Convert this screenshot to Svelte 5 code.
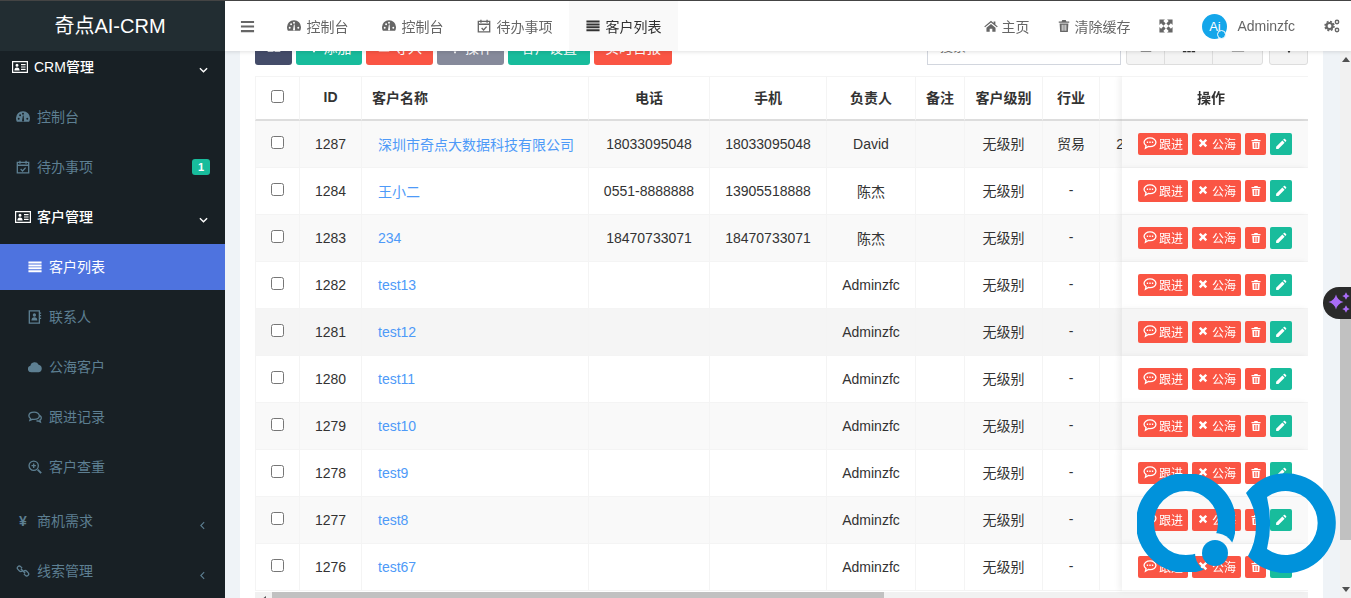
<script>
	// filled (f) and stroked (s) shapes, all on a 16x16 box
	const icons = {
		gauge: { f: 'M8 1.500a7.800 7.800 0 0 0-8 8c0 1.500.4 2.900 1 4h14c.6-1.100 1-2.500 1-4a7.800 7.800 0 0 0-8-8zM4.200 10a1.100 1.100 0 1 1-2.200 0 1.100 1.100 0 0 1 2.200 0zM5.800 6a1.100 1.100 0 1 1-2.200 0 1.100 1.100 0 0 1 2.200 0zM9.100 4.200a1.100 1.100 0 1 1-2.200 0 1.100 1.100 0 0 1 2.200 0zM14 10a1.100 1.100 0 1 1-2.200 0 1.100 1.100 0 0 1 2.200 0zM6.900 12.400l1-6h.8l.5 6a1.200 1.200 0 0 1-2.300 0z' },
		calendar: { s: 'M1.500 2.800h13v12h-13zM1.500 6h13M4.500 .8v3.400M11.500 .8v3.400M5.300 10.300l2.200 2.200 3.500-3.800' },
		idcard: { f: 'M0 2h16v12H0zM1.200 3.200v9.600h13.600V3.200zM5 4.800a1.500 1.500 0 1 1 0 3 1.500 1.500 0 0 1 0-3zM2.400 11.400c0-2 .9-3 2.600-3s2.600 1 2.600 3zM9 5h4.600v1.200H9zM9 7.400h4.600v1.200H9zM9 9.800h4.600V11H9z' },
		lines: { f: 'M.5 1.800h15v2.200H.5zM.5 5.100h15v2.200H.5zM.5 8.400h15v2.200H.5zM.5 11.700h15v2.200H.5z' },
		bars: { f: 'M1 2h14v2.200H1zM1 6.900h14v2.200H1zM1 11.800h14V14H1z' },
		book: { s: 'M1.500 1h11.500v14H1.500zM13 3.500h2M13 6.500h2M13 9.500h2', f: 'M7.300 3.800a1.900 1.900 0 1 1 0 3.800 1.900 1.900 0 0 1 0-3.800zM3.900 12c0-2.500 1.200-3.800 3.400-3.800s3.400 1.300 3.400 3.800z' },
		cloud: { f: 'M3.600 14a3.700 3.700 0 0 1-.9-7.300 5 5 0 0 1 9.400-1.300 4.400 4.400 0 0 1 .3 8.600z' },
		comments: { s: 'M7 2.500C3.500 2.500 1 4.300 1 6.700c0 1.300.7 2.300 1.900 3.100l-.7 2 2.800-1.200c.6.100 1.300.2 2 .2 3.500 0 6-1.800 6-4.100S10.500 2.500 7 2.500zM13.700 6.500c1 .6 1.500 1.500 1.500 2.600 0 1-.6 1.900-1.600 2.500l.6 2.200-2.500-1.300c-.7.1-1.400.1-2.100 0' },
		search: { s: 'M6.500 1.200a5.300 5.300 0 1 0 0 10.600 5.300 5.300 0 0 0 0-10.600zM4 6.500h5M6.500 4v5', f: 'M10.300 11.800l1.500-1.500 4 4-1.500 1.500z' },
		link: { s: 'M7 4.700L5.300 3a2.200 2.200 0 0 0-3.100 0 2.200 2.200 0 0 0 0 3.100L4 7.900a2.200 2.200 0 0 0 3 0M9 11.300l1.700 1.700a2.200 2.200 0 0 0 3.100 0 2.200 2.200 0 0 0 0-3.100L12 8.100a2.200 2.200 0 0 0-3 0M5.500 5.500l5 5' },
		home: { f: 'M8 2L.3 8.500l.9 1L8 3.900l6.800 5.600.9-1L13 6.200V2.800h-2v1.700zM2.800 10v4.500h3.700v-3.500h3v3.500h3.700V10L8 5.700z' },
		trash: { f: 'M5.300 2.800L6 1.200h4l.7 1.600H14v1.400H2V2.800zM3 5.200h10l-.6 9.600H3.600zM5.400 6.600v6.800h1V6.600zM7.500 6.600v6.800h1V6.600zM9.600 6.600v6.800h1V6.600z' },
		expand: { f: 'M.5 .5h6.300L4.900 2.400 7.600 5.100 5.100 7.600 2.400 4.900 .5 6.800zM15.500 .5v6.300l-1.900-1.900-2.700 2.700-2.500-2.500 2.700-2.700L9.200 .5zM.5 15.500V9.200l1.900 1.900 2.700-2.700 2.500 2.500-2.700 2.700 1.900 1.900zM15.500 15.500H9.200l1.900-1.900-2.700-2.700 2.500-2.500 2.700 2.700 1.900-1.900z' },
		comment: { s: 'M8 2.200C4.200 2.200 1.200 4.400 1.200 7.200c0 1.500.9 2.800 2.300 3.800L2.800 14l3.400-2c.6.100 1.200.200 1.800.200 3.800 0 6.800-2.200 6.800-5S11.800 2.200 8 2.200z', f: 'M4.300 6.400h1.600V8H4.300zM7.200 6.400h1.600V8H7.200zM10.100 6.400h1.600V8h-1.600z' },
		times: { f: 'M2.500 4.800l2.300-2.300L8 5.700l3.200-3.200 2.300 2.300L10.300 8l3.200 3.200-2.300 2.300L8 10.300l-3.200 3.200-2.300-2.300L5.700 8z' },
		pencil: { f: 'M1.500 11.500L9.800 3.200l3 3-8.300 8.300H1.500zM10.800 2.200l1-1c.4-.4 1-.4 1.400 0l1.600 1.600c.4.4.4 1 0 1.400l-1 1z' },
		plus: { f: 'M6.800 2h2.400v4.800H14v2.400H9.200V14H6.800V9.200H2V6.800h4.800z' },
		upload: { f: 'M2 4h12v9H2zM3.500 5.500v6h9v-6z' },
		gear: { f: 'M8 3a5 5 0 1 1 0 10A5 5 0 0 1 8 3zM1 7h14v2H1zM7 1h2v14H7z' },
		columns: { f: 'M1 2h4v12H1zM6 2h4v12H6zM11 2h4v12h-4z' },
		bar: { f: 'M1 2h14v11H1z' },
		caret: { f: 'M6.500 1h3v8l3-1-4.500 7-4.500-7 3 1z' }
	};

	const tabs = [
		{ icon: 'gauge', label: '控制台' },
		{ icon: 'gauge', label: '控制台' },
		{ icon: 'calendar', label: '待办事项' },
		{ icon: 'lines', label: '客户列表', active: true }
	];

	const menu = [
		{ kind: 'head first', icon: 'idcard', label: 'CRM管理', arrow: 'down' },
		{ kind: 'item', icon: 'gauge', label: '控制台' },
		{ kind: 'item', icon: 'calendar', label: '待办事项', badge: '1' },
		{ kind: 'head', icon: 'idcard', label: '客户管理', arrow: 'down' },
		{ kind: 'sub active', icon: 'lines', label: '客户列表' },
		{ kind: 'sub', icon: 'book', label: '联系人' },
		{ kind: 'sub', icon: 'cloud', label: '公海客户' },
		{ kind: 'sub', icon: 'comments', label: '跟进记录' },
		{ kind: 'sub', icon: 'search', label: '客户查重' },
		{ kind: 'item apart', glyph: '¥', label: '商机需求', arrow: 'left' },
		{ kind: 'item', icon: 'link', label: '线索管理', arrow: 'left' }
	];

	const columns = ['ID', '客户名称', '电话', '手机', '负责人', '备注', '客户级别', '行业'];

	const rows = [
		{ id: 1287, name: '深圳市奇点大数据科技有限公司', phone: '18033095048', mobile: '18033095048', owner: 'David', trade: '贸易', time: '2024-05-10 10:00' },
		{ id: 1284, name: '王小二', phone: '0551-8888888', mobile: '13905518888', owner: '陈杰', trade: '-', time: '-' },
		{ id: 1283, name: '234', phone: '18470733071', mobile: '18470733071', owner: '陈杰', trade: '-', time: '-' },
		{ id: 1282, name: 'test13', phone: '', mobile: '', owner: 'Adminzfc', trade: '-', time: '-' },
		{ id: 1281, name: 'test12', phone: '', mobile: '', owner: 'Adminzfc', trade: '-', time: '-', hover: true },
		{ id: 1280, name: 'test11', phone: '', mobile: '', owner: 'Adminzfc', trade: '-', time: '-' },
		{ id: 1279, name: 'test10', phone: '', mobile: '', owner: 'Adminzfc', trade: '-', time: '-' },
		{ id: 1278, name: 'test9', phone: '', mobile: '', owner: 'Adminzfc', trade: '-', time: '-' },
		{ id: 1277, name: 'test8', phone: '', mobile: '', owner: 'Adminzfc', trade: '-', time: '-' },
		{ id: 1276, name: 'test67', phone: '', mobile: '', owner: 'Adminzfc', trade: '-', time: '-' }
	];
</script>

{#snippet icon(name, cls = '')}
	<svg class="icon {cls}" viewBox="0 0 16 16" aria-hidden="true">
		{#if icons[name].f}<path d={icons[name].f} fill="currentColor" fill-rule="evenodd" />{/if}
		{#if icons[name].s}<path d={icons[name].s} fill="none" stroke="currentColor" stroke-width="1.500" />{/if}
	</svg>
{/snippet}

{#snippet star(x, y, r)}
	<path d="M{x} {y - r}Q{x + r * 0.2} {y - r * 0.2} {x + r} {y}Q{x + r * 0.2} {y + r * 0.2} {x} {y + r}Q{x - r * 0.2} {y + r * 0.2} {x - r} {y}Q{x - r * 0.2} {y - r * 0.2} {x} {y - r}z" />
{/snippet}

<div class="app">
	<aside class="sidebar">
		<div class="logo">奇点AI-CRM</div>
		<nav class="menu">
			{#each menu as m}
				<a class="row {m.kind}" href="#/">
					<span class="ico">
						{#if m.glyph}<b class="glyph">{m.glyph}</b>{:else}{@render icon(m.icon)}{/if}
					</span>
					<span class="label">{m.label}</span>
					{#if m.badge}<span class="badge">{m.badge}</span>{/if}
					{#if m.arrow === 'down'}
						<svg class="chev" viewBox="0 0 10 6"><path d="M1 1l4 4 4-4" fill="none" stroke="currentColor" stroke-width="1.500" /></svg>
					{/if}
					{#if m.arrow === 'left'}
						<svg class="chev left" viewBox="0 0 6 10"><path d="M5 1L1 5l4 4" fill="none" stroke="currentColor" stroke-width="1.300" /></svg>
					{/if}
				</a>
			{/each}
		</nav>
	</aside>

	<div class="right">
		<header class="topbar">
			<span class="burger">{@render icon('bars')}</span>
			<div class="tabs">
				{#each tabs as t}
					<span class="tab" class:active={t.active}>{@render icon(t.icon)}{t.label}</span>
				{/each}
			</div>
			<div class="tools">
				<span class="tool home">{@render icon('home')}主页</span>
				<span class="tool clear">{@render icon('trash')}清除缓存</span>
				<span class="tool full">{@render icon('expand')}</span>
				<span class="user">
					<span class="avatar">Ai<i></i></span>
					Adminzfc
				</span>
				<svg class="cogs" viewBox="0 0 16 16" aria-hidden="true">
					<circle cx="5.500" cy="8" r="3" fill="none" stroke="currentColor" stroke-width="2.200" />
					<circle cx="5.500" cy="8" r="4.500" fill="none" stroke="currentColor" stroke-width="1.500" stroke-dasharray="2 1.530" />
					<circle cx="13" cy="4" r="1.700" fill="none" stroke="currentColor" stroke-width="1.400" />
					<circle cx="13" cy="12" r="1.700" fill="none" stroke="currentColor" stroke-width="1.400" />
				</svg>
			</div>
		</header>

		<div class="body">
			<main class="content">
				<section class="panel">
					<div class="toolbar">
						<button class="btn navy one">{@render icon('gauge')}</button>
						<button class="btn green add">{@render icon('plus')}添加</button>
						<button class="btn red">{@render icon('upload')}导入</button>
						<button class="btn grey">{@render icon('gear')}操作</button>
						<button class="btn green wide">客户设置</button>
						<button class="btn red slim">实时日报</button>
						<input class="search" placeholder="搜索" />
						<div class="group">
							<span class="a">{@render icon('upload')}</span>
							<span class="b">{@render icon('columns')}</span>
							<span class="c">{@render icon('bar')}</span>
						</div>
						<div class="group single">
							<span class="d">{@render icon('caret')}</span>
						</div>
					</div>

					<div class="tablewrap">
						<table>
							<colgroup>
								<col class="c-check" /><col class="c-id" /><col class="c-name" /><col class="c-phone" />
								<col class="c-mobile" /><col class="c-owner" /><col class="c-note" /><col class="c-level" />
								<col class="c-trade" /><col class="c-time" /><col class="c-extra" /><col class="c-extra" />
								<col class="c-ops" />
							</colgroup>
							<thead>
								<tr>
									<th><input type="checkbox" /></th>
									{#each columns as c, i}
										<th class:left={i === 1}>{c}</th>
									{/each}
									<th>创建时间</th>
									<th>更新时间</th>
									<th>地址</th>
									<th class="ops">操作</th>
								</tr>
							</thead>
							<tbody>
								{#each rows as r}
									<tr class:hover={r.hover}>
										<td><input type="checkbox" /></td>
										<td>{r.id}</td>
										<td class="name"><a href="#/">{r.name}</a></td>
										<td>{r.phone}</td>
										<td>{r.mobile}</td>
										<td>{r.owner}</td>
										<td></td>
										<td class="cjk">无级别</td>
										<td class="cjk">{r.trade}</td>
										<td>{r.time}</td>
										<td>-</td>
										<td>-</td>
										<td class="ops">
											<div class="actions">
												<span class="xs red follow">{@render icon('comment')}跟进</span>
												<span class="xs red">{@render icon('times')}公海</span>
												<span class="xs red sq">{@render icon('trash')}</span>
												<span class="xs green sq edit">{@render icon('pencil')}</span>
											</div>
										</td>
									</tr>
								{/each}
							</tbody>
						</table>
						<div class="hscroll">
							<span class="arrow"></span>
							<span class="hthumb"></span>
						</div>
					</div>
				</section>
			</main>

			<div class="vscroll">
				<span class="up"></span>
				<span class="gap"></span>
				<span class="vthumb"></span>
				<span class="rest"></span>
				<span class="down"></span>
			</div>
		</div>
	</div>

	<!-- floating assistant tab on the right edge -->
	<div class="assistant">
		<svg viewBox="0 0 28 32" fill="#a96cf6" aria-hidden="true">
			{@render star(13, 15, 7.500)}
			{@render star(23, 9, 3.800)}
			{@render star(23, 22, 3.800)}
		</svg>
	</div>

	<!-- watermark logo sitting over the table -->
	<svg class="watermark" viewBox="0 0 200 100" aria-hidden="true">
		<mask id="qcut">
			<rect width="200" height="100" fill="#fff" />
			<circle cx="79" cy="80" r="20" fill="#000" />
		</mask>
		<circle cx="50" cy="50" r="41" fill="none" stroke="#0092db" stroke-width="18" mask="url(#qcut)" />
		<circle cx="79" cy="80" r="13" fill="#0092db" />
		<path fill="#0092db" fill-rule="evenodd" d="M110 20A50 50 0 1 1 112 83A60 60 0 0 0 110 20zM131 24A32 32 0 1 1 131 76A110 110 0 0 0 131 24z" />
	</svg>
</div>

<style>
	:global(body) {
		margin: 0;
		overflow: hidden;
	}

	.app {
		position: relative;
		display: flex;
		height: 597px;
		overflow: hidden;
		border-top: 1px solid #444;
		font-family: 'Liberation Sans', 'Noto Sans CJK SC', sans-serif;
		font-size: 14px;
		color: #333;
	}

	.icon {
		width: 14px;
		height: 14px;
		flex: none;
	}

	/* sidebar */
	.sidebar {
		width: 225px;
		flex: none;
		background: #182025;
		display: flex;
		flex-direction: column;
		overflow: hidden;
	}

	.logo {
		position: relative;
		z-index: 1;
		height: 50px;
		flex: none;
		padding-right: 5px;
		background: #222d32;
		color: #fff;
		font-size: 20px;
		line-height: 50px;
		text-align: center;
	}

	.menu {
		margin-top: -7px;
	}

	.row {
		display: flex;
		align-items: center;
		height: 46px;
		margin-bottom: 4px;
		padding: 0 15px 0 16px;
		color: #5d7f92;
		text-decoration: none;
		position: relative;
	}

	.row .ico {
		width: 21px;
		flex: none;
		display: flex;
		align-items: center;
	}

	.row .glyph {
		font-size: 14px;
		margin-left: 3px;
	}

	.row .label {
		flex: 1;
		padding-bottom: 2px;
	}

	.head {
		color: #fff;
		font-weight: 500;
		padding-left: 15px;
	}

	.head .ico {
		width: 22px;
	}

	.head .icon {
		width: 16px;
		height: 16px;
	}

	.head.first {
		padding-left: 12px;
	}

	.sub {
		padding-left: 28px;
	}

	.sub.active {
		background: #4e73df;
		color: #fff;
	}

	.apart {
		margin-top: 8px;
	}

	.badge {
		width: 18px;
		height: 16px;
		border-radius: 3px;
		background: #18bc9c;
		color: #fff;
		font-size: 11px;
		font-weight: 700;
		line-height: 16px;
		text-align: center;
	}

	.chev {
		width: 9px;
		height: 6px;
		margin: 6px 2px 0 0;
		flex: none;
	}

	.chev.left {
		width: 5px;
		height: 9px;
		margin: 8px 5px 0 0;
	}

	/* top bar */
	.right {
		flex: 1;
		min-width: 0;
		display: flex;
		flex-direction: column;
	}

	.topbar {
		position: relative;
		z-index: 2;
		height: 50px;
		flex: none;
		display: flex;
		align-items: center;
		background: #fff;
		color: #666;
		box-shadow: 0 1px 4px rgba(0, 0, 0, 0.12);
	}

	.burger {
		width: 45px;
		display: flex;
		justify-content: center;
		color: #666;
	}

	.burger .icon {
		width: 15px;
		height: 15px;
	}

	.tabs {
		display: flex;
		height: 100%;
	}

	.tab {
		display: flex;
		align-items: center;
		gap: 6px;
		padding: 0 16.500px;
		white-space: nowrap;
	}

	.tab.active {
		background: #f9f9f9;
		color: #333;
	}

	.tools {
		margin-left: auto;
		display: flex;
		align-items: center;
		height: 100%;
	}

	.tool {
		display: flex;
		align-items: center;
		gap: 3px;
	}

	.clear {
		margin-left: 28px;
	}

	.full {
		margin-left: 29px;
	}

	.user {
		display: flex;
		align-items: center;
		gap: 10px;
		margin-left: 29px;
	}

	.avatar {
		position: relative;
		width: 25px;
		height: 25px;
		border-radius: 50%;
		background: #14a6ea;
		color: #fff;
		font-size: 13px;
		line-height: 25px;
		text-align: center;
	}

	.avatar i {
		position: absolute;
		right: 1px;
		bottom: 0;
		width: 7px;
		height: 7px;
		border-radius: 50%;
		background: #14a6ea;
		border: 1px solid #fff;
	}

	.cogs {
		width: 16px;
		height: 16px;
		margin: 0 11px 0 29px;
		color: #666;
	}

	/* page body */
	.body {
		flex: 1;
		min-height: 0;
		display: flex;
	}

	.content {
		flex: 1;
		min-width: 0;
		background: #eff3f7;
		padding-left: 15px;
		padding-right: 17px;
		overflow: hidden;
	}

	.panel {
		display: flow-root;
		background: #fff;
		height: 100%;
		padding: 0 15px;
	}

	.toolbar {
		display: flex;
		gap: 4px;
		margin-top: -23px;
		margin-bottom: 11px;
		height: 37px;
	}

	.btn {
		display: flex;
		align-items: center;
		gap: 3px;
		height: 37px;
		padding: 0 11px;
		border: 0;
		border-radius: 3px;
		color: #fff;
		font: inherit;
		white-space: nowrap;
	}

	.one {
		width: 37px;
		justify-content: center;
		padding: 0;
	}

	.add {
		padding: 0 10.500px;
	}

	.wide {
		padding: 0 13px;
	}

	.slim {
		padding: 0 11px;
	}

	.navy {
		background: #444c69;
	}

	.green {
		background: #18bc9c;
	}

	.red {
		background: #fa5544;
	}

	.grey {
		background: #868a9b;
	}

	.search {
		width: 194px;
		height: 37px;
		box-sizing: border-box;
		margin-left: auto;
		padding: 0 12px;
		border: 1px solid #d2d6de;
		font: inherit;
		font-size: 13px;
		outline: none;
	}

	.group {
		display: flex;
		margin: 0 0 0 1px;
		height: 37px;
		box-sizing: border-box;
		background: #f4f4f4;
		border: 1px solid #ddd;
		border-radius: 3px;
		color: #333;
	}

	.group.single {
		margin-left: 2px;
	}

	.group span {
		display: flex;
		align-items: center;
		justify-content: center;
		box-sizing: border-box;
		border-left: 1px solid #ddd;
	}

	.group span:first-child {
		border-left: 0;
	}

	.a {
		width: 37px;
	}

	.b {
		width: 48px;
	}

	.c {
		width: 50px;
	}

	.d {
		width: 37px;
	}

	/* table */
	.tablewrap {
		width: 1053px;
		overflow: hidden;
	}

	table {
		width: 1753px;
		table-layout: fixed;
		border-collapse: separate;
		border-spacing: 0;
	}

	.c-check {
		width: 45px;
	}

	.c-id {
		width: 62px;
	}

	.c-name {
		width: 227px;
	}

	.c-phone {
		width: 121px;
	}

	.c-mobile {
		width: 117px;
	}

	.c-owner {
		width: 89px;
	}

	.c-note {
		width: 49px;
	}

	.c-level {
		width: 78px;
	}

	.c-trade {
		width: 57px;
	}

	.c-time {
		width: 144px;
	}

	.c-extra {
		width: 289px;
	}

	.c-ops {
		width: 186px;
	}

	th,
	td {
		box-sizing: border-box;
		padding: 0 8px;
		text-align: center;
		white-space: nowrap;
		overflow: hidden;
		background: #fff;
		border-right: 1px solid #f4f4f4;
		border-bottom: 1px solid #f4f4f4;
	}

	th:first-child,
	td:first-child {
		border-left: 1px solid #f4f4f4;
	}

	th {
		height: 45px;
		padding-bottom: 2px;
		border-top: 1px solid #f4f4f4;
		border-bottom: 2px solid #ddd;
		font-weight: 700;
	}

	th.left {
		text-align: left;
		padding-left: 10px;
	}

	td {
		height: 47px;
	}

	td.cjk {
		padding-bottom: 2px;
	}

	tbody tr:nth-child(odd) td {
		background: #f9f9f9;
	}

	tbody tr.hover td {
		background: #f5f5f5;
	}

	input[type='checkbox'] {
		position: relative;
		top: -1px;
		margin: 0;
		vertical-align: -1px;
	}

	th input[type='checkbox'] {
		top: 0;
	}

	td.name {
		text-align: left;
		padding-left: 16px;
	}

	td.name a {
		color: #4e9af8;
		text-decoration: none;
	}

	.ops {
		position: sticky;
		right: 0;
		border-right: 0;
		box-shadow: -3px 0 6px rgba(0, 0, 0, 0.06);
	}

	th.ops {
		padding-right: 16px;
	}

	.actions {
		display: flex;
		justify-content: center;
		gap: 4px;
	}

	.xs {
		display: flex;
		align-items: center;
		justify-content: center;
		gap: 3px;
		height: 22px;
		box-sizing: border-box;
		padding: 0 5px 2px;
		border-radius: 2px;
		color: #fff;
		font-size: 12px;
	}

	.xs .icon {
		width: 12px;
		height: 12px;
	}

	.follow .icon {
		width: 14px;
		height: 14px;
	}

	.follow {
		gap: 2px;
	}

	.xs.sq {
		width: 21px;
		padding: 0 0 1px;
	}

	.xs.edit {
		width: 22px;
	}

	.hscroll {
		display: flex;
		height: 15px;
		margin-top: 1px;
		background: #f1f1f1;
	}

	.arrow {
		width: 17px;
		display: flex;
		justify-content: center;
		align-items: center;
	}

	.arrow::before {
		content: '';
		border: 4px solid transparent;
		border-left: 0;
		border-right: 5px solid #505050;
	}

	.hthumb {
		width: 612px;
		background: #c1c1c1;
	}

	/* page scrollbar */
	.vscroll {
		width: 11px;
		flex: none;
		display: flex;
		flex-direction: column;
		background: #f1f1f1;
	}

	.up,
	.down {
		height: 17px;
		flex: none;
		display: flex;
		justify-content: center;
		align-items: center;
	}

	.up::before {
		content: '';
		border: 4px solid transparent;
		border-top: 0;
		border-bottom: 5px solid #505050;
	}

	.down::before {
		content: '';
		border: 4px solid transparent;
		border-bottom: 0;
		border-top: 5px solid #505050;
	}

	.gap {
		height: 235px;
		flex: none;
	}

	.vthumb {
		height: 237px;
		flex: none;
		background: #c1c1c1;
	}

	.rest {
		flex: 1;
	}

	/* things floating over the page */
	.assistant {
		position: absolute;
		left: 1323px;
		top: 286px;
		width: 28px;
		height: 32px;
		border-radius: 16px 0 0 16px;
		background: #2a2a2a;
		z-index: 3;
	}

	.assistant svg {
		display: block;
		width: 28px;
		height: 32px;
	}

	.watermark {
		position: absolute;
		left: 1136px;
		top: 472px;
		width: 200px;
		height: 100px;
		z-index: 3;
	}
</style>
